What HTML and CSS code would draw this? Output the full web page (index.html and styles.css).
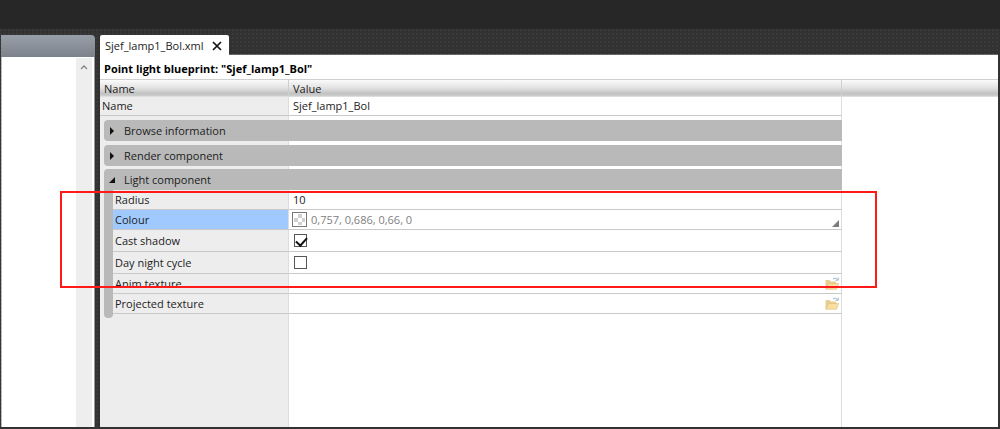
FILE: index.html
```html
<!DOCTYPE html>
<html lang="en">
<head>
<meta charset="utf-8">
<title>Blueprint editor</title>
<link rel="stylesheet" href="styles.css">
</head>
<body>
<div class="app">
  <header class="topbar"></header>
  <main class="workspace">
    <aside class="side">
      <div class="side-header"></div>
      <div class="side-body">
        <div class="scrollbar">
          <button class="scroll-up" type="button" aria-label="Scroll up">
            <svg width="8" height="6" viewBox="0 0 8 6"><path d="M1 5 L4 2 L7 5" fill="none" stroke="#858585" stroke-width="1.3"/></svg>
          </button>
        </div>
      </div>
    </aside>
    <section class="editor">
      <div class="tabs">
        <div class="tab">
          <span>Sjef_lamp1_Bol.xml</span>
          <button class="close" type="button" aria-label="Close">
            <svg width="10" height="10" viewBox="0 0 10 10"><path d="M1 1 L9 9 M9 1 L1 9" stroke="#111" stroke-width="1.7"/></svg>
          </button>
        </div>
      </div>
      <div class="pane">
        <h1 class="title">Point light blueprint: "Sjef_lamp1_Bol"</h1>
        <table class="grid">
          <colgroup><col class="col-rail"><col class="col-name"><col><col class="col-rest"></colgroup>
          <thead>
            <tr><th colspan="2">Name</th><th>Value</th><th></th></tr>
          </thead>
          <tbody>
            <tr class="root-row"><td class="name" colspan="2"><label for="name">Name</label></td><td class="value"><input id="name" type="text" value="Sjef_lamp1_Bol"></td><td></td></tr>
            <tr class="gap"><td class="name plain" colspan="2"></td><td class="value plain"></td><td></td></tr>
            <tr class="group-row"><td colspan="3"><button class="group" type="button" aria-expanded="false"><svg width="6" height="8" viewBox="0 0 6 8"><path d="M1 0 L5 4 L1 8 Z" fill="#111"/></svg>Browse information</button></td><td></td></tr>
            <tr class="gap"><td class="name plain" colspan="2"></td><td class="value plain"></td><td></td></tr>
            <tr class="group-row"><td colspan="3"><button class="group" type="button" aria-expanded="false"><svg width="6" height="8" viewBox="0 0 6 8"><path d="M1 0 L5 4 L1 8 Z" fill="#111"/></svg>Render component</button></td><td></td></tr>
            <tr class="gap-small"><td class="name plain" colspan="2"></td><td class="value plain"></td><td></td></tr>
            <tr class="group-row"><td colspan="3"><button class="group open" type="button" aria-expanded="true"><svg width="6" height="8" viewBox="0 0 6 8"><path d="M6 1 V7 H0 Z" fill="#111"/></svg>Light component</button></td><td></td></tr>
            <tr class="row"><td class="rail"></td><td class="name"><label for="radius">Radius</label></td><td class="value"><input id="radius" type="text" value="10"></td><td></td></tr>
            <tr class="row selected"><td class="rail"></td><td class="name"><label for="colour">Colour</label></td><td class="value"><div class="field"><span class="swatch"></span><input id="colour" class="muted" type="text" value="0,757, 0,686, 0,66, 0"><button class="corner" type="button" aria-label="Pick colour"><svg width="7" height="7" viewBox="0 0 7 7"><path d="M7 0 V7 H0 Z" fill="#7c7c7c"/></svg></button></div></td><td></td></tr>
            <tr class="check-row"><td class="rail"></td><td class="name"><label for="shadow">Cast shadow</label></td><td class="value"><input id="shadow" type="checkbox" checked></td><td></td></tr>
            <tr class="check-row"><td class="rail"></td><td class="name"><label for="cycle">Day night cycle</label></td><td class="value"><input id="cycle" type="checkbox"></td><td></td></tr>
            <tr class="row"><td class="rail"></td><td class="name"><label for="anim">Anim texture</label></td><td class="value"><div class="field"><input id="anim" type="text"><button class="browse" type="button" aria-label="Browse"><svg width="14" height="13" viewBox="0 0 14 13"><path d="M0.5 12 V3 H4.5 L6 4.5 H11 V12 Z" fill="#e9cf94"/><path d="M1 12.3 L3.5 6.5 H13.5 L11.5 12.3 Z" fill="#f8dfa0" stroke="#dcbc79" stroke-width=".6"/><path d="M8 2 Q10.5 0 12.5 2.5 M13.2 0.5 V3.2 H10.5" fill="none" stroke="#9fb3cb"/></svg></button></div></td><td></td></tr>
            <tr class="row"><td class="rail"></td><td class="name"><label for="projected">Projected texture</label></td><td class="value"><div class="field"><input id="projected" type="text"><button class="browse" type="button" aria-label="Browse"><svg width="14" height="13" viewBox="0 0 14 13"><path d="M0.5 12 V3 H4.5 L6 4.5 H11 V12 Z" fill="#e9cf94"/><path d="M1 12.3 L3.5 6.5 H13.5 L11.5 12.3 Z" fill="#f8dfa0" stroke="#dcbc79" stroke-width=".6"/><path d="M8 2 Q10.5 0 12.5 2.5 M13.2 0.5 V3.2 H10.5" fill="none" stroke="#9fb3cb"/></svg></button></div></td><td></td></tr>
            <tr class="gap"><td class="rail-end"><div></div></td><td class="name plain"></td><td class="value plain"></td><td></td></tr>
            <tr><td class="name plain" colspan="2"></td><td class="value plain"></td><td></td></tr>
          </tbody>
        </table>
      </div>
    </section>
  </main>
  <div class="highlight"></div>
</div>
</body>
</html>
```
FILE: styles.css
```css
* { box-sizing: border-box; }

body {
  margin: 0;
  font: 11px/16px "Open Sans", "Noto Sans", sans-serif;
  color: #1c1c1c;
}

button, input {
  margin: 0;
  padding: 0;
  border: 0;
  background: none;
  font: inherit;
  color: inherit;
}

svg { display: block; }

.app {
  position: relative;
  display: flex;
  flex-direction: column;
  min-height: 100vh;
  background: #333;
}

.topbar {
  height: 29px;
  background: #272727;
}

.workspace {
  flex: 1;
  display: flex;
  gap: 5px;
  padding: 6px 2px 2px 1px;
  background: radial-gradient(circle at 1px 1px, #3a3a3a 1px, #323232 1px) 0 0 / 4px 4px;
}

.side {
  width: 94px;
  display: flex;
  flex-direction: column;
}

.side-header {
  height: 22px;
  border-radius: 0 4px 0 0;
  background: linear-gradient(#989fa9, #7b828b);
}

.side-body {
  flex: 1;
  display: flex;
  justify-content: flex-end;
  padding: 1px 2px 0 0;
  border-left: 1px solid #bbb;
  border-right: 1px solid #999;
  background: #fff;
}

.scrollbar {
  width: 16px;
  background: #eee;
}

.scroll-up {
  display: flex;
  justify-content: center;
  width: 100%;
  padding-top: 6px;
}

.editor {
  flex: 1;
  display: flex;
  flex-direction: column;
}

.tabs {
  display: flex;
  border-bottom: 1px solid #666;
}

.tab {
  display: flex;
  align-items: center;
  gap: 8px;
  height: 20px;
  margin-bottom: -1px;
  padding: 2px 7px 0 5px;
  border-radius: 2px 2px 0 0;
  background: #fff;
}

.pane {
  flex: 1;
  display: flex;
  flex-direction: column;
  background: #fff;
}

.title {
  margin: 0;
  height: 25px;
  padding: 6px 4px 0;
  border-bottom: 1px solid #d0d0d0;
  font-size: 11px;
  line-height: 16px;
  color: #000;
}

.grid {
  flex: 1;
  width: 100%;
  table-layout: fixed;
  border-collapse: separate;
  border-spacing: 0;
}

.col-rail { width: 13px; }
.col-name { width: 176px; }
.col-rest { width: 156px; }

th, td { padding: 0; text-align: left; vertical-align: middle; }

thead tr { height: 17px; }

th {
  padding-left: 4px;
  border-bottom: 1px solid #ddd;
  background: linear-gradient(#fbfbfb, #e2e2e2 50%, #c2c2c2 85%, #cfcfcf);
  font-weight: normal;
  line-height: 15px;
  box-shadow: inset -1px 0 #cfcfcf;
}

th:last-child { box-shadow: none; }

.name {
  padding-left: 2px;
  border-right: 1px solid #ddd;
  border-bottom: 1px solid #c9c9c9;
  background: #ededed;
}

.value {
  padding-left: 4px;
  border-right: 1px solid #ddd;
  border-bottom: 1px solid #c9c9c9;
}

.plain { border-bottom: 0; }

.name label, .value input[type="text"] {
  display: block;
  height: 16px;
}

.value input[type="text"] { width: 100%; min-width: 0; }

.root-row { height: 19px; }
.gap { height: 4px; }
.gap-small { height: 3px; }
.group-row { height: 21px; }
.row { height: 20px; }
.check-row { height: 22px; }

.group-row td:first-child {
  padding-left: 4px;
  background: #ededed;
}

.group {
  display: flex;
  align-items: center;
  gap: 9px;
  width: 100%;
  height: 21px;
  padding-left: 5px;
  border-radius: 4px 0 0 4px;
  background: #b9b9b9;
}

.group.open { border-radius: 4px 0 0 0; }

.rail {
  background: linear-gradient(to right, #ededed 4px, #b9b9b9 4px);
}

.rail-end {
  padding-left: 4px;
  background: #ededed;
}

.rail-end div {
  height: 4px;
  border-radius: 0 0 4px 4px;
  background: #b9b9b9;
}

.selected .name { background: #a0caff; }

.field {
  display: flex;
  align-items: center;
  padding-right: 2px;
}

.swatch {
  flex: none;
  width: 15px;
  height: 15px;
  margin: 0 4px 0 -1px;
  padding: 1px;
  border: 1px solid #777;
  background: conic-gradient(#d0d0d0 25%, #fff 0 50%, #d0d0d0 0 75%, #fff 0) 0 0 / 8px 8px content-box;
}

.value .muted { color: #808080; }

.corner { padding-top: 7px; }

input[type="checkbox"] {
  display: block;
  appearance: none;
  width: 13px;
  height: 13px;
  margin-left: 1px;
  border: 1px solid #555;
  background: #fff;
}

input[type="checkbox"]:checked::before {
  content: "";
  display: block;
  width: 5px;
  height: 9px;
  margin-left: 3px;
  border: solid #111;
  border-width: 0 2px 2px 0;
  transform: rotate(42deg);
}

.highlight {
  position: absolute;
  left: 60px;
  top: 191px;
  width: 817px;
  height: 97px;
  border: 2px solid #ff1a1a;
  pointer-events: none;
}
```
